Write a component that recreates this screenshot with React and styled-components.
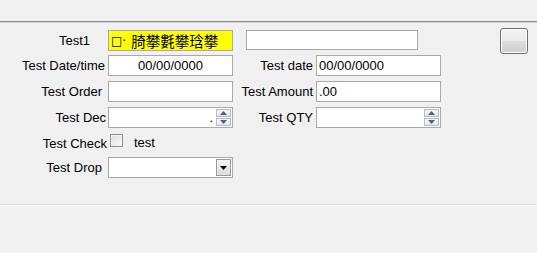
import React from 'react'
import styled, { createGlobalStyle } from 'styled-components'

const GlobalStyle = createGlobalStyle`
  html, body {
    margin: 0;
    padding: 0;
    background: #f0f0f0;
  }
  body {
    font-family: "Liberation Sans", Arial, sans-serif;
    font-size: 13px;
    color: #000;
  }
`

const Window = styled.div`
  width: 537px;
  height: 253px;
  display: flex;
  flex-direction: column;
  background: #f0f0f0;
  overflow: hidden;
`

const TopBar = styled.div`
  height: 21px;
  flex: none;
  border-bottom: 1px solid #8a8a8a;
  box-shadow: 0 1px 0 #d4d4d4;
`

const Main = styled.div`
  box-sizing: border-box;
  height: 183px;
  flex: none;
  padding-top: 8px;
  border-bottom: 1px solid #dadada;
  box-shadow: 0 1px 0 #ffffff;
`

const Footer = styled.div`
  flex: 1;
`

const Form = styled.div`
  display: grid;
  grid-template-columns: 108px 125px 83px 125px 1fr;
  grid-template-rows: 25px 26px 26px 26px 24px 21px;
  align-items: start;
`

const Label = styled.div`
  height: 21px;
  display: flex;
  align-items: center;
  justify-content: flex-end;
  padding-right: ${p => p.$pad ?? 3}px;
  white-space: nowrap;
`

const Field = styled.div`
  box-sizing: border-box;
  position: relative;
  height: 21px;
  display: flex;
  align-items: center;
  justify-content: ${p => p.$align || 'flex-start'};
  padding: 0 ${p => (p.$right ? 19 : 2)}px 0 2px;
  background: ${p => p.$bg || '#ffffff'};
  border: 1px solid #a9a9a9;
  white-space: nowrap;
  overflow: hidden;
`

const Wide = styled(Field)`
  grid-column: 3 / 5;
  margin-left: 13px;
  width: 172px;
  height: 20px;
`

const Cjk = styled.span`
  font-family: "Noto Sans CJK SC", "Noto Sans CJK JP", sans-serif;
  font-size: 14.5px;
`

const Mark = styled.span`
  font-family: "DejaVu Sans", sans-serif;
  font-size: 12px;
  margin-right: 5px;
`

const SpinBox = styled.div`
  position: absolute;
  right: 1px;
  top: 1px;
  bottom: 1px;
  width: 15px;
  display: flex;
  flex-direction: column;
  gap: 1px;
`

const SpinButton = styled.div`
  flex: 1;
  display: flex;
  align-items: center;
  justify-content: center;
  border: 1px solid #b8bccc;
  background: linear-gradient(#f7f7f7, #e4e6ec);
`

const DropButton = styled.div`
  position: absolute;
  right: 1px;
  top: 1px;
  bottom: 1px;
  width: 15px;
  box-sizing: border-box;
  display: flex;
  align-items: center;
  justify-content: center;
  border: 1px solid #9a9a9a;
  background: linear-gradient(#f4f4f4, #dcdcdc);
`

const SideButton = styled.button`
  grid-column: 5;
  grid-row: 1;
  justify-self: end;
  margin: -2px 9px 0 0;
  width: 28px;
  height: 26px;
  padding: 0;
  border: 1px solid #707070;
  border-radius: 3px;
  background: linear-gradient(#f2f2f2 0%, #ebebeb 48%, #dddddd 52%, #cfcfcf 100%);
  box-shadow: inset 0 0 0 1px #fcfcfc;
`

const CheckRow = styled.div`
  grid-column: 2 / 4;
  height: 19px;
  display: flex;
  align-items: center;
  gap: 11px;
  padding-left: 2px;
`

const CheckBox = styled.span`
  box-sizing: border-box;
  width: 13px;
  height: 13px;
  margin-top: -4px;
  border: 1px solid #8f8f8f;
  background: linear-gradient(135deg, #dcdcdc, #fbfbfb);
  box-shadow: inset 0 0 0 1px #f4f4f4;
`

const Arrow = ({ up, color = '#4d6185' }) => (
  <svg width="7" height="4" viewBox="0 0 7 4">
    <path d={up ? 'M0 4 L3.5 0 L7 4 Z' : 'M0 0 L3.5 4 L7 0 Z'} fill={color} />
  </svg>
)

const Spinner = () => (
  <SpinBox>
    <SpinButton><Arrow up /></SpinButton>
    <SpinButton><Arrow /></SpinButton>
  </SpinBox>
)

const App = () => {
  return (
    <Window>
      <GlobalStyle />
      <TopBar />
      <Main>
        <Form>
          <Label $pad={18}>Test1</Label>
          <Field $bg="#ffff00"><Mark>□·</Mark><Cjk>䐀攀氀攀琀攀</Cjk></Field>
          <Wide />
          <SideButton aria-label="button" />

          <Label>Test Date/time</Label>
          <Field $align="center">00/00/0000</Field>
          <Label>Test date</Label>
          <Field>00/00/0000</Field>
          <div />

          <Label $pad={6}>Test Order</Label>
          <Field />
          <Label>Test Amount</Label>
          <Field>.00</Field>
          <div />

          <Label $pad={2}>Test Dec</Label>
          <Field $align="flex-end" $right>.<Spinner /></Field>
          <Label>Test QTY</Label>
          <Field $right><Spinner /></Field>
          <div />

          <Label $pad={1}>Test Check</Label>
          <CheckRow>
            <CheckBox />
            <span>test</span>
          </CheckRow>
          <div />
          <div />

          <Label $pad={6}>Test Drop</Label>
          <Field $right>
            <DropButton><Arrow color="#000" /></DropButton>
          </Field>
        </Form>
      </Main>
      <Footer />
    </Window>
  )
}

export default App
